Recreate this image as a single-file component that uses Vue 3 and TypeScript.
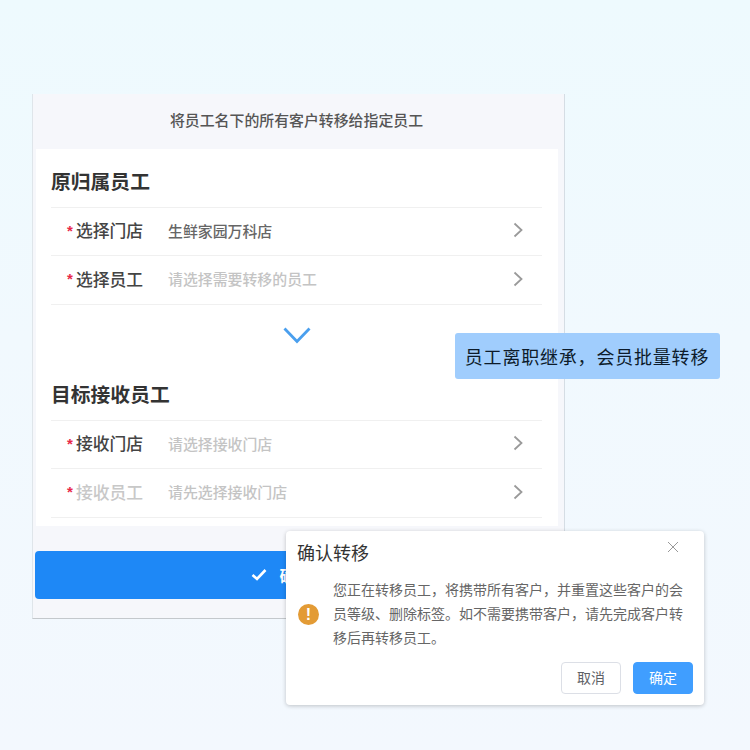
<script setup lang="ts">
interface Row { label: string; value: string; tone: string; muted?: boolean }
const sections: { title: string; rows: Row[] }[] = [
  { title: '原归属员工', rows: [
    { label: '选择门店', value: '生鲜家园万科店', tone: 'filled' },
    { label: '选择员工', value: '请选择需要转移的员工', tone: 'hint' },
  ] },
  { title: '目标接收员工', rows: [
    { label: '接收门店', value: '请选择接收门店', tone: 'hint' },
    { label: '接收员工', value: '请先选择接收门店', tone: 'hint', muted: true },
  ] },
]
</script>

<template>
  <div class="page">
    <div class="phone">
      <div class="head">将员工名下的所有客户转移给指定员工</div>
      <div class="body">
        <template v-for="(s, i) in sections" :key="s.title">
          <div class="arrow" v-if="i === 1">
            <svg width="28" height="17" viewBox="0 0 28 17"><path d="M1.500 1.500 14 14.500 26.500 1.500" fill="none" stroke="#4a9fee" stroke-width="2.800" /></svg>
          </div>
          <h2 class="title">{{ s.title }}</h2>
          <div v-for="r in s.rows" :key="r.label" class="row">
            <span class="star">*</span>
            <span class="label" :class="{ faded: r.muted }">{{ r.label }}</span>
            <span class="value" :class="r.tone">{{ r.value }}</span>
            <svg class="chev" width="10" height="16" viewBox="0 0 10 16"><path d="M1.500 1.500 8.500 8 1.500 14.500" fill="none" stroke="#9a9a9a" stroke-width="1.800" /></svg>
          </div>
        </template>
      </div>
      <div class="foot">
        <button class="submit" type="button">
          <svg width="16" height="13" viewBox="0 0 16 13"><path d="M1.500 7 6 11 14.500 2" fill="none" stroke="#fff" stroke-width="2.600" /></svg>
          确认转移
        </button>
      </div>
    </div>

    <div class="tag">员工离职继承，会员批量转移</div>

    <div class="dialog">
      <div class="d-title">确认转移</div>
      <svg class="d-close" width="12" height="12" viewBox="0 0 12 12"><path d="M1 1 11 11M11 1 1 11" stroke="#999" stroke-width="1" fill="none" /></svg>
      <div class="d-content">
        <div class="warn">!</div>
        <p class="d-text">您正在转移员工，将携带所有客户，并重置这些客户的会员等级、删除标签。如不需要携带客户，请先完成客户转移后再转移员工。</p>
      </div>
      <div class="d-actions">
        <button class="btn" type="button">取消</button>
        <button class="btn primary" type="button">确定</button>
      </div>
    </div>
  </div>
</template>

<style>
body { margin: 0; }
</style>

<style scoped>
.page {
  position: relative;
  width: 750px;
  height: 750px;
  box-sizing: border-box;
  padding: 94px 0 0 32px;
  overflow: hidden;
  background: linear-gradient(180deg, #eefafe 0%, #f1f9fe 45%, #f3f8fe 100%);
  font-family: "Liberation Sans", "Noto Sans CJK SC", sans-serif;
}
.phone {
  width: 533px;
  height: 525px;
  box-sizing: border-box;
  display: flex;
  flex-direction: column;
  background: #f6f7fb;
  border-left: 1px solid #dfe5ea;
  border-right: 1px solid #d5dde4;
  border-bottom: 1px solid #c4c8cc;
}
.head {
  height: 55px;
  box-sizing: border-box;
  padding: 0 4px 4px 0;
  display: flex;
  align-items: center;
  justify-content: center;
  font-size: 14.900px;
  font-weight: 500;
  color: #555;
}
.body {
  width: 522px;
  height: 377px;
  margin-left: 3px;
  box-sizing: border-box;
  padding: 0.600px 16px 0 15px;
  background: #fff;
}
.title {
  height: 58px;
  margin: 0;
  box-sizing: border-box;
  padding-top: 19px;
  font-size: 19.800px;
  line-height: 27px;
  font-weight: 700;
  color: #333;
  border-bottom: 1px solid #f0f0f0;
}
.row {
  display: flex;
  align-items: center;
  height: 48.500px;
  box-sizing: border-box;
  padding: 0 19px 2px 16px;
  border-bottom: 1px solid #f0f0f0;
}
.star {
  width: 9px;
  font-size: 15px;
  font-weight: 700;
  color: #e8284a;
}
.label {
  width: 92px;
  font-size: 16.800px;
  font-weight: 500;
  color: #444;
}
.label.faded { color: #c8c8c8; }
.value { flex: 1; font-size: 14.900px; }
.value.filled { color: #666; font-weight: 500; }
.value.hint { color: #c4c4c4; font-weight: 500; }
.arrow {
  height: 58px;
  display: flex;
  justify-content: center;
  box-sizing: border-box;
  padding: 22px 0 0 0;
}
.foot {
  flex: 1;
  padding: 25px 4px 0 2px;
}
.submit {
  width: 100%;
  height: 47.500px;
  display: flex;
  align-items: center;
  justify-content: center;
  gap: 12px;
  border: 0;
  border-radius: 4px;
  background: #1e88f6;
  color: #fff;
  font: 700 16px "Liberation Sans", "Noto Sans CJK SC", sans-serif;
}
.tag {
  position: absolute;
  left: 455px;
  top: 333px;
  width: 265px;
  height: 46px;
  box-sizing: border-box;
  padding-right: 1px;
  display: flex;
  align-items: center;
  justify-content: center;
  border-radius: 3px;
  background: #a0cdfd;
  color: #0d1b2a;
  font-size: 18px;
  letter-spacing: 0.800px;
}
.dialog {
  position: absolute;
  left: 286px;
  top: 531px;
  width: 418px;
  height: 174px;
  box-sizing: border-box;
  padding: 12px 11px 11px 11px;
  display: flex;
  flex-direction: column;
  border-radius: 4px;
  background: #fff;
  box-shadow: 0 1px 4px rgba(0, 0, 0, 0.22);
}
.d-title {
  font-size: 18px;
  line-height: 22px;
  color: #333;
}
.d-close { position: absolute; right: 25px; top: 10px; }
.d-content {
  display: flex;
  align-items: center;
  margin-top: 13px;
}
.warn {
  flex: none;
  width: 21px;
  height: 21px;
  margin: 0 14px 0 1px;
  border-radius: 50%;
  background: #e39b35;
  color: #fff;
  font-size: 16px;
  font-weight: 700;
  line-height: 21px;
  text-align: center;
}
.d-text {
  margin: 0;
  width: 354px;
  font-size: 14px;
  line-height: 24px;
  color: #666;
}
.d-actions {
  display: flex;
  justify-content: flex-end;
  gap: 12px;
  margin-top: auto;
}
.btn {
  width: 60px;
  height: 32px;
  padding: 0 0 2px;
  border: 1px solid #dcdfe6;
  border-radius: 4px;
  background: #fff;
  color: #606266;
  font: 14px "Liberation Sans", "Noto Sans CJK SC", sans-serif;
}
.btn.primary {
  border-color: #409eff;
  background: #409eff;
  color: #fff;
}
</style>
